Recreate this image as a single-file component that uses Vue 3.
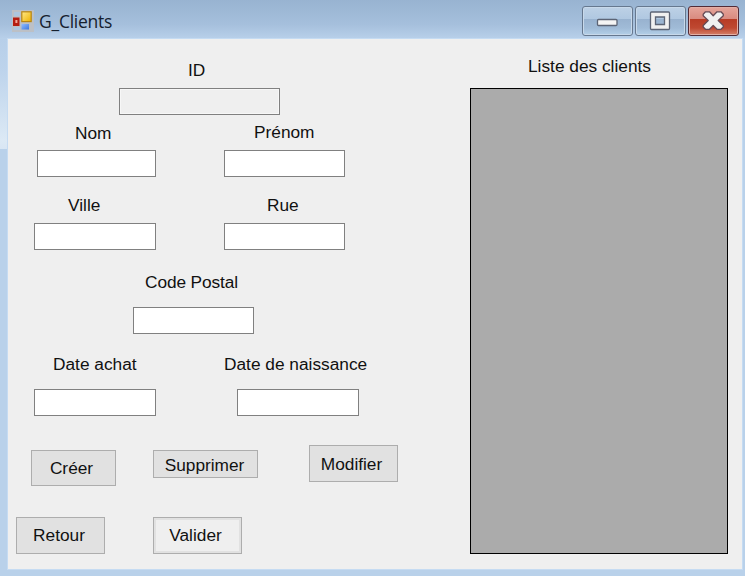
<script setup>
const rows = [
  { cls: 'row-id', fields: [{ id: 'id', label: 'ID', readonly: true }] },
  { cls: 'row-name', fields: [{ id: 'nom', label: 'Nom' }, { id: 'prenom', label: 'Prénom' }] },
  { cls: 'row-address', fields: [{ id: 'ville', label: 'Ville' }, { id: 'rue', label: 'Rue' }] },
  { cls: 'row-postal', fields: [{ id: 'postal', label: 'Code Postal' }] },
  { cls: 'row-dates', fields: [{ id: 'achat', label: 'Date achat' }, { id: 'naissance', label: 'Date de naissance' }] },
]
</script>

<template>
  <div class="window">
    <header class="titlebar">
      <svg class="app-icon" width="22" height="22" viewBox="0 0 22 22">
        <defs>
          <linearGradient id="gold" x1="0" y1="0" x2="1" y2="1">
            <stop offset="0" stop-color="#ffe98a" /><stop offset="1" stop-color="#eeb200" />
          </linearGradient>
          <linearGradient id="sky" x1="0" y1="0" x2="1" y2="1">
            <stop offset="0" stop-color="#8fbcff" /><stop offset="1" stop-color="#3d78e0" />
          </linearGradient>
        </defs>
        <rect width="22" height="22" fill="#bcc0c6" />
        <path d="M2 2h6v4H2zM2 17h6v3H2z" fill="#adc6df" />
        <rect x="1" y="7.500" width="6.500" height="8.500" fill="#b51d10" />
        <rect x="3.400" y="10" width="2" height="3" fill="#f3a79a" />
        <rect x="9.800" y="1.800" width="9.400" height="9.800" fill="url(#gold)" stroke="#b88612" stroke-width="1.2" />
        <rect x="9.500" y="14" width="7.500" height="5.500" fill="url(#sky)" />
      </svg>
      <span class="title">G_Clients</span>
      <div class="controls">
        <button class="control" aria-label="Réduire">
          <svg width="49" height="28" viewBox="0 0 49 28">
            <rect x="14.500" y="12.500" width="19.500" height="6" rx="1" fill="#f4f4f4" stroke="#5c6475" stroke-width="1.3" />
          </svg>
        </button>
        <button class="control" aria-label="Agrandir">
          <svg width="49" height="28" viewBox="0 0 49 28">
            <path d="M15.500 5h17q1 0 1 1v15.500q0 1-1 1h-17q-1 0-1-1V6q0-1 1-1zM19.500 10v7.500h9V10z" fill="#f0f0f0" fill-rule="evenodd" stroke="#5c6475" stroke-width="1.3" />
          </svg>
        </button>
        <button class="control close" aria-label="Fermer">
          <svg width="49" height="28" viewBox="0 0 49 28">
            <path d="M14.200 7.200L16.500 4.800H20.500L24.200 8.700L28 4.800H32L34.300 7.200V8.800L29.200 13.500L34.300 18.500V20L32 22.300H28L24.200 18.500L20.500 22.300H16.500L14.200 20V18.500L19.200 13.500L14.200 8.800Z" fill="#f0f0f0" stroke="#654a54" stroke-width="1.3" stroke-linejoin="round" />
          </svg>
        </button>
      </div>
    </header>
    <main class="client">
      <form class="form" @submit.prevent>
        <div v-for="row in rows" :key="row.cls" class="row" :class="row.cls">
          <div v-for="f in row.fields" :key="f.id" class="field" :class="f.id">
            <label :for="f.id">{{ f.label }}</label>
            <input :id="f.id" type="text" :readonly="f.readonly" />
          </div>
        </div>
        <div class="actions">
          <button class="btn creer">Créer</button>
          <button class="btn supprimer">Supprimer</button>
          <button class="btn modifier">Modifier</button>
        </div>
        <div class="actions second">
          <button class="btn retour">Retour</button>
          <button class="btn valider">Valider</button>
        </div>
      </form>
      <section class="list">
        <h2>Liste des clients</h2>
        <div class="datagrid"></div>
      </section>
    </main>
  </div>
</template>

<style>
body { margin: 0; overflow: hidden; }
</style>

<style scoped>
* { box-sizing: border-box; }
.window {
  width: 745px;
  height: 576px;
  padding: 0 3px 7px 8px;
  background:
    linear-gradient(#98b3d1, #a5bfdc 24px, #b7cfe9 38px, transparent 39px) 0 0 / 100% 39px no-repeat,
    linear-gradient(#b7cfe9, #bed4ec 30%, #dce9f5 92%, #d8e6f4) 0 39px / 7px 110px no-repeat,
    #b9d1ea;
  font-family: "Liberation Sans", Arial, sans-serif;
  font-size: 17.3px;
  color: #111;
}
.titlebar {
  display: flex;
  align-items: flex-start;
  height: 39px;
  padding: 6px 3px 0 4px;
}
.app-icon { margin-top: 4px; }
.title {
  margin: 3px 0 0 5px;
  font: 17.5px/24px "Open Sans", "Noto Sans", sans-serif;
  letter-spacing: -0.25px;
  color: #15202e;
}
.controls { display: flex; gap: 2px; margin-left: auto; }
.control {
  width: 51px;
  height: 30px;
  padding: 0;
  border: 1px solid #66788f;
  border-radius: 3px;
  background: linear-gradient(#bdd1e6, #b0c8e1 42%, #98b2cf 43%, #a0bbd7 75%, #b4d0e8);
  box-shadow: inset 0 0 0 1px #c8d9ea;
}
.control svg { display: block; }
.close {
  border-color: #532b36;
  background: linear-gradient(#e5a59b, #d98b80 42%, #b73b25 43%, #bf4932 75%, #d4806a);
  box-shadow: inset 0 0 0 1px #e3afa5;
}
.client {
  display: flex;
  height: 530px;
  background: #efefef;
  box-shadow: 0 0 0 1px #c5dbf2;
}
.form { width: 462px; }
.row { display: flex; align-items: flex-end; }
.field { display: flex; flex-direction: column; gap: 8px; }
label { width: 0; height: 20px; line-height: 20px; white-space: nowrap; }
input {
  width: 121px;
  height: 27px;
  padding: 0 4px;
  border: 1px solid #808080;
  border-radius: 0;
  background: #fff;
  font: inherit;
  outline: none;
}
input:read-only { background: #efefef; box-shadow: inset 0 0 0 1px #f7f7f7; }
.row-id { padding: 21px 0 0 111px; }
.id label { margin-left: 69px; }
.id input { width: 161px; }
.row-name { padding: 7px 0 0 29px; gap: 68px; }
.nom { gap: 7px; }
.nom label { margin-left: 38px; }
.nom input { width: 119px; }
.prenom label { margin-left: 30px; }
.row-address { padding: 18px 0 0 26px; gap: 68px; }
.ville label { margin-left: 34px; }
.ville input, .achat input { width: 122px; }
.rue label { margin-left: 43px; }
.row-postal { padding: 22px 0 0 125px; }
.postal, .achat, .naissance { gap: 15px; }
.postal label { margin-left: 12px; }
.postal label { letter-spacing: -0.1px; }
.row-dates { padding: 20px 0 0 26px; gap: 81px; }
.achat label { margin-left: 19px; }
.naissance label { margin-left: -13px; }
.naissance input { width: 122px; }
.actions { display: flex; align-items: flex-start; margin: 29px 0 0 23px; height: 41px; }
.second { margin: 31px 0 0 8px; }
.btn {
  height: 37px;
  width: 89px;
  padding: 0;
  border: 1px solid #adadad;
  background: #e1e1e1;
  color: #111;
  font: inherit;
  line-height: 20px;
  white-space: nowrap;
}
.creer { width: 85px; height: 36px; margin-top: 5px; padding-right: 4px; }
.supprimer { width: 105px; height: 28px; margin: 5px 0 0 37px; padding: 1px 2px 0 0; }
.modifier { margin: 0 0 0 51px; padding-right: 4px; }
.retour { padding: 0 3px 1px 0; }
.valider { margin-left: 48px; padding: 0 4px 1px 0; background: #efefef; box-shadow: inset 0 0 0 2px #e1e1e1; }
.list { width: 258px; }
h2 { margin: 17px 0 12px 58px; font-size: inherit; font-weight: 400; line-height: 20px; white-space: nowrap; }
.datagrid { width: 258px; height: 466px; border: 1px solid #000; background: #ababab; }
</style>
